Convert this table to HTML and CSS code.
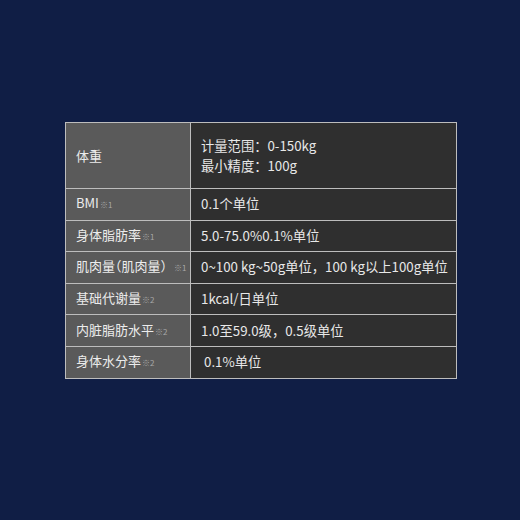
FILE: index.html
```html
<!DOCTYPE html>
<html lang="zh">
<head>
<meta charset="utf-8">
<link rel="stylesheet" href="styles.css">
</head>
<body>
<main class="stage">
  <table class="spec">
    <colgroup>
      <col class="c-label">
      <col class="c-value">
    </colgroup>
    <tr class="tall">
      <th>体重</th>
      <td><div>计量范围：0-150kg</div><div>最小精度：100g</div></td>
    </tr>
    <tr>
      <th>BMI<span class="note">※1</span></th>
      <td>0.1个单位</td>
    </tr>
    <tr>
      <th>身体脂肪率<span class="note">※1</span></th>
      <td>5.0-75.0%0.1%单位</td>
    </tr>
    <tr>
      <th>肌肉量<span class="half">（</span>肌肉量<span class="half">）</span><span class="note wide">※1</span></th>
      <td>0~100 kg~50g单位，100 kg以上100g单位</td>
    </tr>
    <tr>
      <th>基础代谢量<span class="note">※2</span></th>
      <td>1kcal/日单位</td>
    </tr>
    <tr>
      <th>内脏脂肪水平<span class="note">※2</span></th>
      <td>1.0至59.0级，0.5级单位</td>
    </tr>
    <tr>
      <th>身体水分率<span class="note">※2</span></th>
      <td><span class="indent">0.1%单位</span></td>
    </tr>
  </table>
</main>
</body>
</html>
```

FILE: styles.css
```css
html, body {
  margin: 0;
  padding: 0;
}
body {
  background: #101e45;
  font-family: "Noto Sans CJK SC", "Noto Sans", sans-serif;
  color: #e6e6e6;
}
.stage {
  width: 520px;
  height: 520px;
  padding-top: 122px;
  box-sizing: border-box;
}
.spec {
  border-collapse: collapse;
  table-layout: fixed;
  width: 391px;
  margin: 0 0 0 65px;
  border: 1.5px solid #bdbdbd;
}
.c-label {
  width: 125px;
}
.c-value {
  width: 266px;
}
.spec th, .spec td {
  border: 1.5px solid #bdbdbd;
  height: 30.6px;
  padding: 0 0 0 10px;
  font-size: 13.3px;
  line-height: 20px;
  text-align: left;
  vertical-align: middle;
  font-weight: normal;
  white-space: nowrap;
  overflow: hidden;
}
.spec th {
  background: #5a5a5a;
  color: #ececec;
  font-size: 13px;
}
.spec td {
  background: #2f2f2f;
  color: #e8e8e8;
}
.spec tr.tall th, .spec tr.tall td {
  height: 65px;
}
.half {
  font-feature-settings: "halt";
}
.note {
  font-size: 8px;
  color: #a8a8a8;
  margin-left: 1px;
}
.note.wide {
  margin-left: 7px;
}
.indent {
  padding-left: 3px;
}
```
